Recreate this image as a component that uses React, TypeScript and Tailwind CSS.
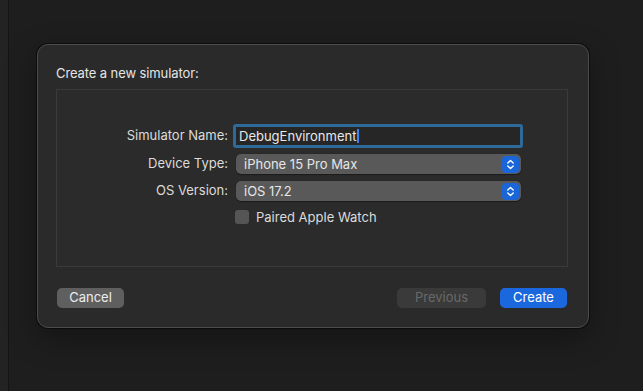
import React from "react";

function Stepper() {
  return (
    <div className="w-[17px] h-[17px] rounded-[4px] bg-[#1a66d9] flex items-center justify-center">
      <svg width="9" height="11" viewBox="0 0 9 11" fill="none" stroke="#ffffff" strokeWidth="1.4" strokeLinecap="round" strokeLinejoin="round">
        <path d="M1.8 4 L4.5 1.5 L7.2 4" />
        <path d="M1.8 7 L4.5 9.5 L7.2 7" />
      </svg>
    </div>
  );
}

function Popup({ value }: { value: string }) {
  return (
    <div className="ml-[3px] w-[285px] h-[20px] rounded-[5px] bg-[#595959] flex items-center justify-between pl-[8px] pr-[2px] shadow-[0_0.5px_1px_rgba(0,0,0,0.4)]">
      <span className="text-[13px] text-[#e6e6e6] leading-none">{value}</span>
      <Stepper />
    </div>
  );
}

export default function App() {
  return (
    <div
      className="w-[643px] h-[391px] bg-[#1e1e1e] flex overflow-hidden"
      style={{ fontFamily: "Inter, 'Noto Sans', sans-serif" }}
    >
      <div className="w-[9px] h-full bg-[#232323] border-r border-[#141414]" />
      <div className="flex-1 pl-[28px] pt-[44px]">
        <div className="w-[552px] h-[284px] rounded-[11px] bg-[#2a2a2a] border border-[#4c4c4c] shadow-[0_0_0_1px_#0c0c0c,0_10px_30px_rgba(0,0,0,0.35)] flex flex-col pl-[18px]">
          <div className="pt-[20px] text-[13px] text-[#e4e4e4] leading-[16px] tracking-[-0.1px]">
            Create a new simulator:
          </div>
          <div className="mt-[8px] w-[512px] h-[178px] border border-[#3b3b3b] bg-[#2b2b2b] flex flex-col pt-[34px]">
            <div className="flex items-center h-[24px]">
              <div className="w-[176px] text-right text-[13px] text-[#dcdcdc] pr-[5px]">Simulator Name:</div>
              <div className="w-[290px] h-[24px] rounded-[3px] border-[3px] border-[#2d6a9a] bg-[#262626] flex items-center pl-[3px]">
                <span className="text-[13px] text-[#e8e8e8] leading-none">DebugEnvironment</span>
                <span className="w-[2px] h-[14px] bg-[#3b82f6] ml-[1px]" />
              </div>
            </div>
            <div className="flex items-center h-[20px] mt-[6px]">
              <div className="w-[176px] text-right text-[13px] text-[#dcdcdc] pr-[5px]">Device Type:</div>
              <Popup value="iPhone 15 Pro Max" />
            </div>
            <div className="flex items-center h-[20px] mt-[7px]">
              <div className="w-[176px] text-right text-[13px] text-[#dcdcdc] pr-[5px]">OS Version:</div>
              <Popup value="iOS 17.2" />
            </div>
            <div className="flex items-center h-[14px] mt-[9px] pl-[178px]">
              <div className="w-[14px] h-[14px] rounded-[3px] bg-[#555555]" />
              <span className="ml-[7px] text-[13px] text-[#dcdcdc] leading-none">Paired Apple Watch</span>
            </div>
          </div>
          <div className="w-[511px] flex items-center mt-[21px]">
            <div className="ml-[1px] w-[67px] h-[20px] rounded-[5px] bg-[#5f5f5f] flex items-center justify-center text-[13px] text-[#ececec]">
              Cancel
            </div>
            <div className="flex-1" />
            <div className="w-[89px] h-[20px] rounded-[5px] bg-[#3a3a3a] flex items-center justify-center text-[13px] text-[#696969]">
              Previous
            </div>
            <div className="w-[67px] h-[20px] ml-[14px] rounded-[5px] bg-[#1b68de] flex items-center justify-center text-[13px] text-white">
              Create
            </div>
          </div>
        </div>
      </div>
    </div>
  );
}
